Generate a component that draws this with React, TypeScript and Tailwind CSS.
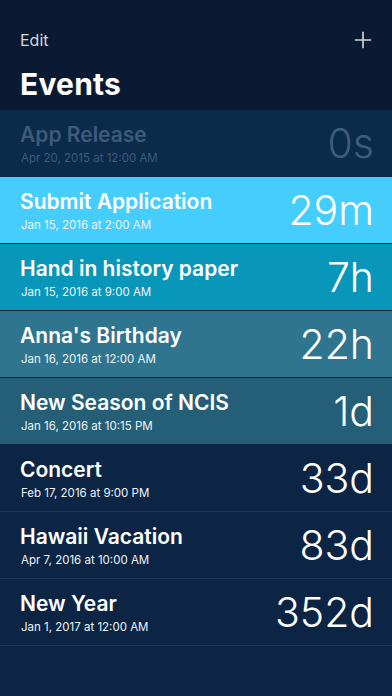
import { Plus } from 'lucide-react';

interface EventRow {
  title: string;
  date: string;
  left: string;
  bg: string;
  border: string;
  dim?: boolean;
}

const events: EventRow[] = [
  { title: 'App Release', date: 'Apr 20, 2015 at 12:00 AM', left: '0s', bg: 'bg-[#0c2a4a]', border: 'border-[#0c2a4a]', dim: true },
  { title: 'Submit Application', date: 'Jan 15, 2016 at 2:00 AM', left: '29m', bg: 'bg-[#44cdfd]', border: 'border-[#0b1d38]' },
  { title: 'Hand in history paper', date: 'Jan 15, 2016 at 9:00 AM', left: '7h', bg: 'bg-[#0996bb]', border: 'border-[#0b1d38]' },
  { title: "Anna's Birthday", date: 'Jan 16, 2016 at 12:00 AM', left: '22h', bg: 'bg-[#2f7590]', border: 'border-[#0b1d38]' },
  { title: 'New Season of NCIS', date: 'Jan 16, 2016 at 10:15 PM', left: '1d', bg: 'bg-[#245f77]', border: 'border-[#0c2545]' },
  { title: 'Concert', date: 'Feb 17, 2016 at 9:00 PM', left: '33d', bg: 'bg-[#0c2545]', border: 'border-[#1a3656]' },
  { title: 'Hawaii Vacation', date: 'Apr 7, 2016 at 10:00 AM', left: '83d', bg: 'bg-[#0c2545]', border: 'border-[#1a3656]' },
  { title: 'New Year', date: 'Jan 1, 2017 at 12:00 AM', left: '352d', bg: 'bg-[#0c2545]', border: 'border-[#1a3656]' },
];

const App = () => {
  return (
    <div className="w-[392px] h-[696px] bg-[#0c2545] overflow-hidden font-['Inter','Liberation_Sans',sans-serif] text-white">
      {/* Header */}
      <div className="h-[110px] bg-[#0b1a33] px-5 flex flex-col">
        <div className="flex items-center justify-between h-[36px] mt-[22px]">
          <span className="text-[16px] text-[#d3d8df]">Edit</span>
          <Plus size={26} strokeWidth={1.5} className="text-[#d3d8df] -mr-[4px]" />
        </div>
        <h1 className="text-[30px] font-bold leading-none mt-[11px] tracking-[0.2px]">Events</h1>
      </div>

      {/* List */}
      {events.map((ev) => (
        <div
          key={ev.title}
          className={`h-[67px] ${ev.bg} border-b ${ev.border} flex items-center justify-between pl-5 pr-[18px]`}
        >
          <div className="flex flex-col pt-[2px]">
            <span className={`text-[21px] font-semibold leading-none ${ev.dim ? 'text-[#3e5b7a]' : 'text-white'}`}>
              {ev.title}
            </span>
            <span className={`text-[11.5px] leading-none mt-[8px] ml-[1px] ${ev.dim ? 'text-[#3e5b7a]' : 'text-[#eef4f8]'}`}>
              {ev.date}
            </span>
          </div>
          <span className={`text-[41px] font-light leading-none ${ev.dim ? 'text-[#3e5d7c]' : 'text-white'}`}>
            {ev.left}
          </span>
        </div>
      ))}
    </div>
  );
};

export default App;
